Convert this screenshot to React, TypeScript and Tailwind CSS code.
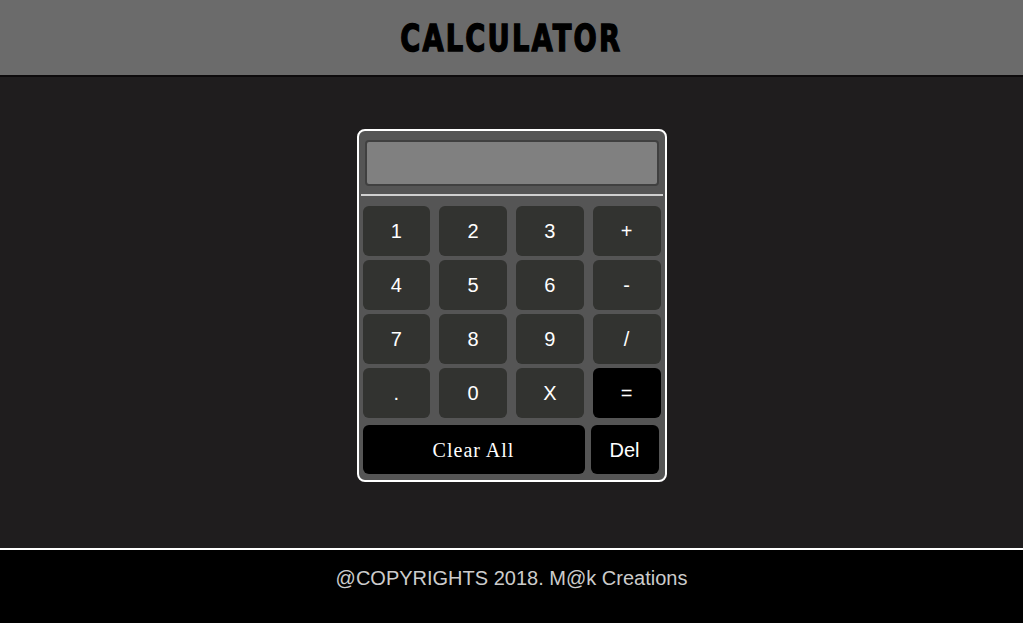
import React from "react"

const keys = ["1", "2", "3", "+", "4", "5", "6", "-", "7", "8", "9", "/", ".", "0", "X", "="]

export default function App() {
  return (
    <div className="flex min-h-[623px] flex-col bg-[#1f1d1e] font-['Liberation_Sans',Arial,sans-serif]">
      <header className="flex h-[77px] items-center justify-center border-b-2 border-[#0d0b0c] bg-[#6b6b6b]">
        <h1 className="mt-[1px] origin-center scale-x-[0.72] font-['DejaVu_Sans',sans-serif] text-[38px] font-bold tracking-[3px] text-black [-webkit-text-stroke:1.5px_black]">
          CALCULATOR
        </h1>
      </header>

      <main className="flex flex-1 justify-center pt-[52px]">
        <div className="h-[353px] w-[310px] rounded-[8px] border-2 border-white bg-[#555555]">
          <div className="px-[6px] pt-[9px]">
            <div className="h-[46px] w-full rounded-[4px] border-2 border-[#404040] bg-[#808080]" />
          </div>
          <div className="mx-[2px] mt-[8px] h-[2px] bg-[#d0d0d0]" />
          <div className="px-[4px] pt-[10px]">
            <div className="grid grid-cols-4 gap-x-[9px] gap-y-[4px]">
              {keys.map((k) => (
                <button
                  key={k}
                  className={
                    "h-[50px] rounded-[6px] text-[20px] text-white " +
                    (k === "=" ? "bg-black" : "bg-[#323330]")
                  }
                >
                  {k}
                </button>
              ))}
            </div>
            <div className="mt-[7px] flex gap-[6px] pr-[2px]">
              <button className="h-[49px] flex-1 rounded-[6px] bg-black font-['Liberation_Serif',serif] text-[20px] tracking-[1px] text-white">
                Clear All
              </button>
              <button className="h-[49px] w-[68px] rounded-[6px] bg-black text-[20px] text-white">
                Del
              </button>
            </div>
          </div>
        </div>
      </main>

      <footer className="flex h-[75px] justify-center border-t-2 border-white bg-black pt-[13px]">
        <p className="text-[20px] text-[#cccccc]">@COPYRIGHTS 2018. M@k Creations</p>
      </footer>
    </div>
  )
}
